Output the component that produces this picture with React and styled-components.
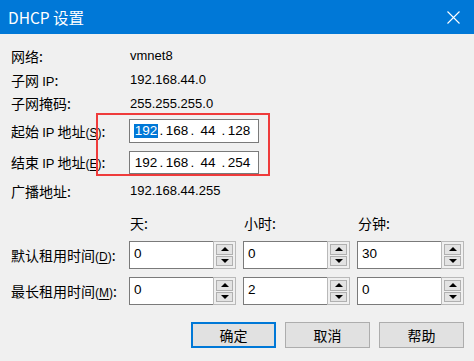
import React from 'react'
import styled, { createGlobalStyle } from 'styled-components'

const Global = createGlobalStyle`
  html, body { margin: 0; padding: 0; background: #f0f0f0; }
  body { font-family: "Liberation Sans", "Noto Sans CJK SC", sans-serif; }
`

const CJK = `"Noto Sans CJK SC", "Liberation Sans", sans-serif`

const Window = styled.div`
  width: 474px;
  height: 361px;
  background: #f0f0f0;
  position: relative;
  overflow: hidden;
`

const TitleBar = styled.div`
  height: 34px;
  background: #0078d7;
  display: flex;
  align-items: center;
  justify-content: space-between;
  padding: 0 14px 0 8px;
  color: #fff;
  font-family: ${CJK};
  font-size: 15.5px;
`

const CloseBtn = styled.svg`
  width: 13px;
  height: 13px;
`

const Body = styled.div`
  padding: 10px 0 0 11px;
`

const InfoRow = styled.div`
  display: flex;
  align-items: center;
  height: ${p => p.$h}px;
`

const Label = styled.div`
  width: ${p => p.$w || 118}px;
  flex-shrink: 0;
  font-family: ${CJK};
  font-size: 14px;
  color: #000;
  white-space: nowrap;
`

const Latin = styled.span`
  font-family: "Liberation Sans", sans-serif;
  font-size: 13px;
`

const Key = styled.span`
  font-family: "Liberation Sans", sans-serif;
  font-size: 12px;
  u { text-decoration-thickness: 1px; text-underline-offset: 2px; }
`

const Value = styled.div`
  font-size: 13px;
  color: #000;
  padding-left: 1px;
`

const IpBox = styled.div`
  width: 130px;
  height: ${p => p.$h}px;
  border: 1px solid #7a7a7a;
  background: #fff;
  display: flex;
  align-items: center;
  padding-left: 4px;
  box-sizing: border-box;
  font-size: 13.5px;
`

const Octet = styled.span`
  width: 24px;
  display: flex;
  justify-content: center;
`

const Dot = styled.span`
  width: 7px;
  text-align: center;
`

const Selected = styled.span`
  background: #0078d7;
  color: #fff;
  line-height: 14px;
  padding: 0 1px;
`

const Highlight = styled.div`
  position: absolute;
  left: 96px;
  top: 113px;
  width: 174px;
  height: 63px;
  border: 2px solid #ef3b3b;
  box-sizing: border-box;
  pointer-events: none;
`

const LeaseRow = styled.div`
  display: flex;
  align-items: center;
  gap: 7px;
  margin-top: ${p => p.$top || 0}px;
`

const HeadCell = styled.div`
  width: 107px;
  font-family: ${CJK};
  font-size: 14px;
  line-height: 20px;
  padding-left: 1px;
  box-sizing: border-box;
`

const Spinner = styled.div`
  width: 107px;
  flex-shrink: 0;
  height: 28px;
  display: flex;
`

const SpinInput = styled.div`
  flex: 1;
  min-width: 0;
  border: 1px solid #7a7a7a;
  border-right: none;
  background: #fff;
  font-size: 13.5px;
  padding: 4px 0 0 4px;
  box-sizing: border-box;
`

const SpinButtons = styled.div`
  width: 23px;
  border: 1px solid #b9b9b9;
  background: #f0f0f0;
  box-sizing: border-box;
  display: flex;
  flex-direction: column;
  gap: 1px;
  padding: 2px;
`

const SpinBtn = styled.div`
  flex: 1;
  background: #e3e3e3;
  border: 1px solid #b0b0b0;
  display: flex;
  align-items: center;
  justify-content: center;
`

const Arrow = styled.div`
  width: 0;
  height: 0;
  border-left: 4px solid transparent;
  border-right: 4px solid transparent;
  ${p => (p.$down ? 'border-top: 4px solid #000;' : 'border-bottom: 4px solid #000;')}
`

const Footer = styled.div`
  width: 453px;
  display: flex;
  justify-content: flex-end;
  gap: 9px;
  margin-top: 17px;
`

const Button = styled.button`
  width: 85px;
  height: 26px;
  background: #e1e1e1;
  border: ${p => (p.$primary ? '2px solid #0078d7' : '1px solid #adadad')};
  font-family: ${CJK};
  font-size: 14px;
  color: #000;
  padding: 0;
  margin: 0;
`

const Spin = ({ value }) => (
  <Spinner>
    <SpinInput>{value}</SpinInput>
    <SpinButtons>
      <SpinBtn><Arrow /></SpinBtn>
      <SpinBtn><Arrow $down /></SpinBtn>
    </SpinButtons>
  </Spinner>
)

const Ip = ({ parts, h, select }) => (
  <IpBox $h={h}>
    {parts.map((p, i) => (
      <React.Fragment key={i}>
        {i > 0 && <Dot>.</Dot>}
        <Octet>{select && i === 0 ? <Selected>{p}</Selected> : p}</Octet>
      </React.Fragment>
    ))}
  </IpBox>
)

export default function App() {
  return (
    <Window>
      <Global />
      <TitleBar>
        <span>DHCP 设置</span>
        <CloseBtn viewBox="0 0 13 13">
          <path d="M0.5 0.5 L12.5 12.5 M12.5 0.5 L0.5 12.5" stroke="#fff" strokeWidth="1.1" />
        </CloseBtn>
      </TitleBar>
      <Body>
        <InfoRow $h={23}>
          <Label>网络:</Label>
          <Value>vmnet8</Value>
        </InfoRow>
        <InfoRow $h={25}>
          <Label>子网 <Latin>IP</Latin>:</Label>
          <Value>192.168.44.0</Value>
        </InfoRow>
        <InfoRow $h={22}>
          <Label>子网掩码:</Label>
          <Value>255.255.255.0</Value>
        </InfoRow>
        <InfoRow $h={33}>
          <Label>起始 <Latin>IP</Latin> 地址<Key>(<u>S</u>)</Key>:</Label>
          <Ip parts={['192', '168', '44', '128']} h={24} select />
        </InfoRow>
        <InfoRow $h={30}>
          <Label>结束 <Latin>IP</Latin> 地址<Key>(<u>E</u>)</Key>:</Label>
          <Ip parts={['192', '168', '44', '254']} h={23} />
        </InfoRow>
        <InfoRow $h={27}>
          <Label>广播地址:</Label>
          <Value>192.168.44.255</Value>
        </InfoRow>
        <LeaseRow $top={9}>
          <Label $w={111} />
          <HeadCell>天:</HeadCell>
          <HeadCell>小时:</HeadCell>
          <HeadCell>分钟:</HeadCell>
        </LeaseRow>
        <LeaseRow $top={8}>
          <Label $w={111}>默认租用时间<Key>(<u>D</u>)</Key>:</Label>
          <Spin value="0" />
          <Spin value="0" />
          <Spin value="30" />
        </LeaseRow>
        <LeaseRow $top={8}>
          <Label $w={111}>最长租用时间<Key>(<u>M</u>)</Key>:</Label>
          <Spin value="0" />
          <Spin value="2" />
          <Spin value="0" />
        </LeaseRow>
        <Footer>
          <Button $primary>确定</Button>
          <Button>取消</Button>
          <Button>帮助</Button>
        </Footer>
      </Body>
      <Highlight />
    </Window>
  )
}
